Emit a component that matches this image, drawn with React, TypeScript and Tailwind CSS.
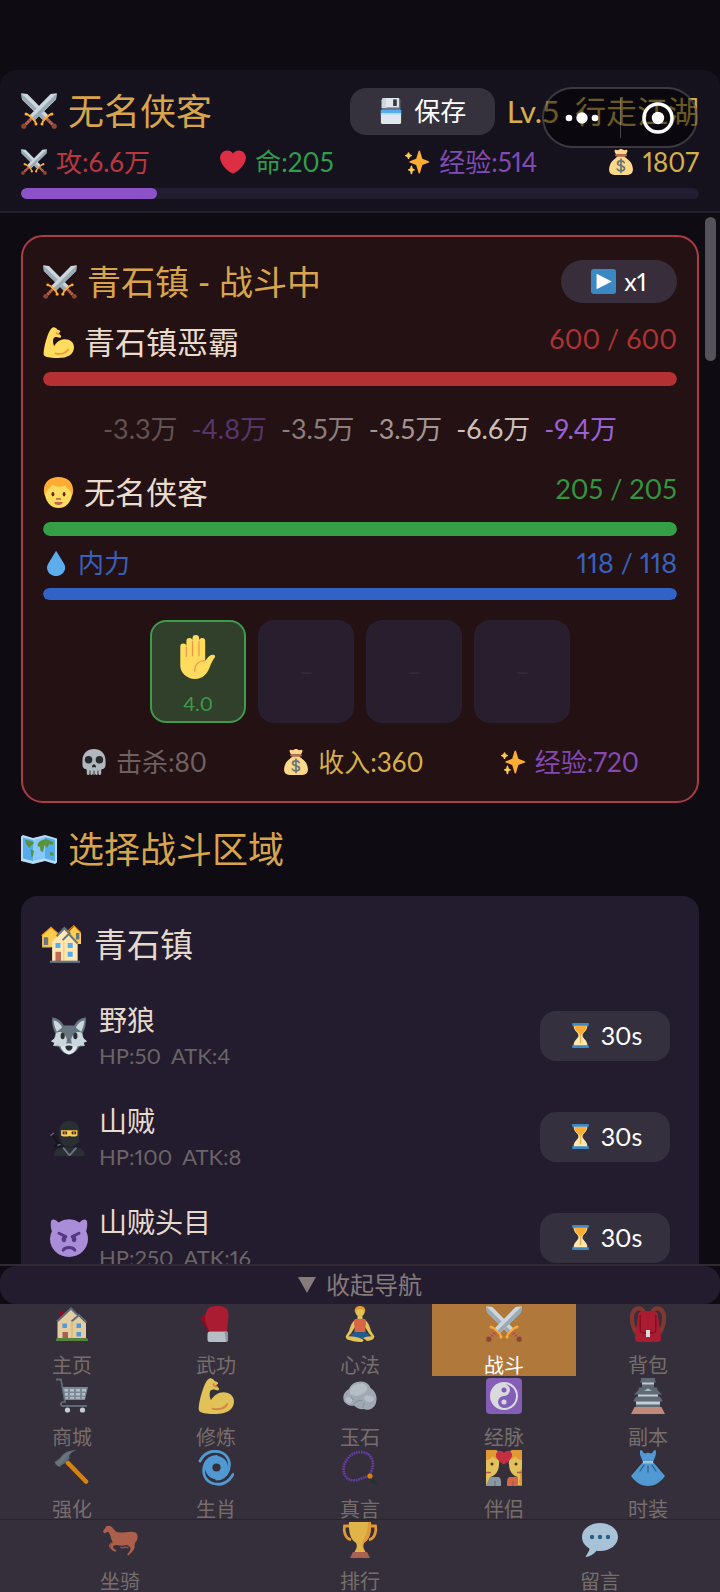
import { useState, type ReactNode } from "react";

const sword = (
  <g>
    <path fill="#CCD6DD" d="M.2.2 6.4 1 27.500 22.500 22.500 27.500 1 6.4z" />
    <path fill="#9AAAB6" d="M.2.2 1 6.4 22.500 27.500l2.500-2.500z" />
    <path stroke="#BF6952" strokeWidth="3" d="m25.5 25.5 6 6" />
    <path stroke="#8A3B26" strokeWidth="1" d="m26.8 28.6 2-2m0 4 2-2" />
    <circle cx="33.200" cy="33.200" r="2.600" fill="#8A4633" />
    <path fill="none" stroke="#FFAC33" strokeWidth="2" strokeLinecap="round" d="M21 31c.3-2.600 1.400-3.600 3-5s3.800-4.700 7-5" />
    <circle cx="31" cy="21" r="1.500" fill="#FFAC33" />
    <circle cx="21" cy="31" r="1.500" fill="#FFAC33" />
  </g>
);

const ICONS: Record<string, ReactNode> = {
  swords: (
    <>
      {sword}
      <g transform="matrix(-1 0 0 1 36 0)">{sword}</g>
    </>
  ),
  heart: (
    <path fill="#DD2E44" d="M35.885 11.833c0-5.450-4.418-9.868-9.867-9.868-3.308 0-6.227 1.633-8.018 4.129-1.791-2.496-4.710-4.129-8.017-4.129-5.450 0-9.868 4.417-9.868 9.868 0 .772.098 1.520.266 2.241C1.751 22.587 11.216 31.568 18 34.034c6.783-2.466 16.249-11.447 17.617-19.959.170-.721.268-1.469.268-2.242z" />
  ),
  sparkles: (
    <>
      <path fill="#FFAC33" d="M34.347 16.893l-8.899-3.294-3.323-10.891c-.128-.420-.517-.708-.956-.708-.439 0-.828.288-.956.708l-3.322 10.891-8.900 3.294c-.393.146-.653.519-.653.938 0 .418.260.793.653.938l8.895 3.293 3.324 11.223c.126.424.516.715.959.715.442 0 .833-.291.959-.716l3.324-11.223 8.896-3.293c.391-.144.652-.518.652-.937 0-.418-.261-.792-.653-.938z" />
      <path fill="#FFCC4D" d="M14.470 27.894l-2.314-.856-.9-3.300c-.118-.436-.513-.738-.964-.738-.451 0-.846.302-.965.737l-.9 3.300-2.313.856c-.393.145-.653.520-.653.938 0 .418.260.793.653.938l2.301.853.907 3.622c.112.445.511.756.970.756.459 0 .858-.311.970-.757l.907-3.622 2.301-.853c.393-.143.653-.518.653-.936 0-.418-.260-.793-.653-.938zM10.406 8.225l-2.364-.875-.875-2.365c-.146-.393-.519-.653-.938-.653-.418 0-.792.260-.938.653l-.875 2.365-2.365.875c-.393.146-.653.520-.653.938 0 .418.260.792.653.938l2.365.875.875 2.365c.146.393.520.653.938.653.418 0 .792-.260.938-.653l.875-2.365 2.365-.875c.393-.146.653-.520.653-.938 0-.418-.261-.792-.654-.938z" />
    </>
  ),
  money: (
    <>
      <path fill="#FDD888" d="M31.898 19.198c-2.500-3.900-8.200-7.600-9.300-9.198h-9.200c-1 1.600-6.800 5.200-9.300 9.198C2.700 22 1.500 25.500 1.500 28.500 1.500 33 4.500 36 9 36h18c4.500 0 7.500-3 7.500-7.500 0-3-1.200-6.500-2.602-9.302z" />
      <path fill="#FDD888" d="M24.500 7.800c2.500-2.500 3-5.800 1.600-6.600C25 .3 23.600 2 22 1.500 20.600 1 19.800 0 18 0s-2.600 1-4 1.500C12.400 2 11 .3 9.900 1.200c-1.400.8-.9 4.100 1.600 6.600z" />
      <rect x="10" y="7" width="16" height="3.400" rx="1.700" fill="#BF6952" />
      <path fill="none" stroke="#67757F" strokeWidth="2.400" strokeLinecap="round" d="M22.500 18.800c-.8-1.500-2.300-2.200-4.500-2.200-2.900 0-4.700 1.200-4.700 3.300 0 4.800 9.600 2 9.600 6.800 0 2.200-2 3.500-4.900 3.500-2.400 0-4.200-.8-5-2.400M18 14v18.500" />
    </>
  ),
  floppy: (
    <>
      <path fill="#66757F" d="M8 0h20a3 3 0 0 1 3 3v14H5V3a3 3 0 0 1 3-3z" />
      <path fill="#CCD6DD" d="M5 3a3 3 0 0 1 3-3h4v14H5z" />
      <path fill="#E1E8ED" d="M11 0h18v13H11z" />
      <path fill="#31373D" d="M21 2h5v9h-5z" />
      <path fill="#E1E8ED" d="M4 17h28v17a2 2 0 0 1-2 2H6a2 2 0 0 1-2-2z" />
      <path fill="#55ACEE" d="M4 16.500h28V21H4z" />
      <path fill="#BBDDF5" d="M4 21h28v2.500H4z" />
    </>
  ),
  play: (
    <>
      <rect width="36" height="36" rx="4" fill="#3B88C3" />
      <path fill="#FFF" d="M8 7l22 11L8 29z" />
    </>
  ),
  muscle: (
    <>
      <path fill="#FFDC5D" d="M12.804 22.277c-.057-.349-.124-.679-.206-.973-.62-2.230-1.140-3.164-.918-5.494.29-1.584.273-4.763 4.483-4.268 1.112.131 2.843.927 3.834.910.567-.010.980-1.157 1.017-1.539.051-.526-.865-1.420-1.248-1.813-.383-.393-2.039-1.466-2.039-1.466.5-.7 2.700-1.700 2.400-2.700-.4-1.500-3.500-1.600-3.800-2.300C15.900 1.300 13.700 0 12.200.2 10.300.5 8.900 2.600 7.800 4.400 5.300 8.600 1.600 20.700.8 28.600c-.2 2-.3 4.200 1.200 5.100C4.300 35.500 11 36 18 36c9.800 0 18-3.900 18-12.500 0-5.600-4.500-9.300-10.200-9.300-5.800 0-9.800 3.100-12.996 8.077z" />
      <path fill="none" stroke="#EF9645" strokeWidth="1.900" strokeLinecap="round" d="M14.500 30.600c5.500 1.500 12.500.3 14.700-4.600M18.500 8.500c-1.700-.2-2.800-1-3-2.200" />
    </>
  ),
  person: (
    <>
      <path fill="#FFDC5D" d="M18 2C8 2 2 8 2 17c0 11 7 19 16 19s16-8 16-19C34 8 28 2 18 2z" />
      <path fill="#FFAC33" d="M18 0C8 0 1 6 1 15.500c0 2.500.5 4.500 1.200 6 .8-3 2-6.500 4.300-8 2-1.200 3-2.500 4-4.500 5 3 12.500 2.500 15.500 1 .8 2.500 2 3.300 3.500 4 2.300 1.200 3.500 4.500 4.300 7.500.7-1.500 1.200-3.500 1.200-6C35 6 28 0 18 0z" />
      <ellipse cx="11.500" cy="20" rx="1.600" ry="2.500" fill="#662113" />
      <ellipse cx="24.500" cy="20" rx="1.600" ry="2.500" fill="#662113" />
      <path fill="#C1694F" d="M16 24.500h4a1 1 0 0 1 0 2h-4a1 1 0 0 1 0-2zM13 29h10c0 2.200-2.300 3.500-5 3.500S13 31.200 13 29z" />
    </>
  ),
  droplet: (
    <path fill="#5DADEC" d="M28.344 17.768 18.148 1.090 8 17.654c-2.200 3.100-3 6.300-2 9.600C7.500 32.500 12.300 36 18.100 36s10.700-3.600 12.100-8.700c.900-3.300.3-6.600-1.856-9.532z" />
  ),
  hand: (
    <>
      <path fill="#FFDC5D" d="M3.500 9.500a2.500 2.500 0 0 1 5 0V5a2.500 2.500 0 0 1 5 0V2.700a2.700 2.700 0 0 1 5.400 0V5a2.500 2.500 0 0 1 5 0v16l2.500-3c1-1 2.200-1.900 3.800-1.800 1.700.1 2.200 1.300 1.400 2.400-1.700 2.200-2.800 4.700-3.900 7.400C25.500 32 22 36 15.500 36S3.500 31 3.500 25z" />
      <path fill="none" stroke="#EF9645" strokeWidth="1" strokeLinecap="round" d="M8.500 10v7.500m5-12V17m5.300-11.500V17M23.900 21c-4.700-.3-8.300 2.500-8.700 8.500" />
    </>
  ),
  skull: (
    <>
      <path fill="#CCD6DD" d="M34 16C34 6 27 0 18 0S2 6 2 16v6c0 3 2 5.500 6 6.500V34c0 2.700 4 2.700 4 0 0 2.700 4 2.700 4 0 0 2.700 4 2.700 4 0 0 2.700 4 2.700 4 0 0 2.700 4 2.700 4 0v-5.500c4-1 6-3.500 6-6.500z" />
      <circle cx="10.500" cy="15" r="5.200" fill="#292F33" />
      <circle cx="25.500" cy="15" r="5.200" fill="#292F33" />
      <path fill="#292F33" d="M18 21c1.500 0 3.200 2.500 2.700 3.800-.6 1.200-2 .6-2.700.2-.7.400-2.100 1-2.700-.2-.5-1.300 1.200-3.800 2.700-3.800z" />
      <path stroke="#292F33" strokeWidth="1.300" d="M12.500 30v6m11-6v6m-5.500-6v6" />
    </>
  ),
  map: (
    <>
      <path fill="#BBDDF5" d="M0 5.500 2 4l10 3 12-3 12 3.500v24L34 33l-10-3-12 3L0 30z" />
      <path fill="#55ACEE" d="m2 6.500 10 2.500v21L2 27.500zM24 6l10 2.700v21.500L24 27.500z" />
      <path fill="#88C9F9" d="m12 9 12-3v21.500L12 30z" />
      <path fill="#5C913B" d="M4 9c3 0 6 1 9 2.500-.500 2.500-3 2.500-4.500 5.500L5 13zM9.500 18l3.500 2-1 5-1.500 1.500zM17 12c3-3 6-4 8-4l7 3v3l-4-1-2 4-2.500-3-1.500 7-2.500-1-.5-4-2.500-1zM29 21l3.500 1v3L29 24z" />
    </>
  ),
  houses: (
    <>
      <path fill="#FFCC4D" d="M1 10 9 3l7 6v12H1zM24 8l6-6 6 6v10H24z" />
      <path fill="none" stroke="#66757F" strokeWidth="1" d="M.8 21h8" />
      <path fill="none" stroke="#F4900C" strokeWidth="1" d="m.5 10.500 8.500-7.500 8 7M22 8.500 29.500 1.500 35.700 7.500" />
      <path fill="#66757F" d="M2.500 12h4v7h-4zM31.500 8h3v6h-3z" />
      <path fill="#FFE8B6" d="M10 16 21 5l12 12v17H10z" />
      <path fill="none" stroke="#66757F" strokeWidth="1.800" d="m14 11 7-7.500L26.500 9M19.500 14.500 25 9l8 8.500" />
      <path stroke="#FFCC4D" strokeWidth="1" d="M20.500 16v17" />
      <path fill="#55ACEE" d="M13 17h4.500v4.500H13zM24 17h4.500v4.500H24zM24 25h4.500v4.500H24z" />
      <path fill="#BF6952" d="M13 25h5v8.500h-5z" />
      <path fill="#66757F" d="M8 33h27v2H8z" />
    </>
  ),
  wolf: (
    <>
      <path fill="#66757F" d="M2 .5c5 .5 9 3.500 11 7.500h10c2-4 6-7 11-7.500.500 6-1 11-3 15l1 5 3.500 3-4 1 1 3-5 1c-2 4-5 6.500-9.500 7-4.500-.5-7.500-3-9.500-7l-5-1 1-3-4-1L4 20.500l1-5C3 11.500 1.500 6.500 2 .5z" />
      <path fill="#CCD6DD" d="M3.500 3c4 1 6.500 3.500 8 7L6.500 14C4.500 10 3.500 6 3.500 3zM32.500 3c-4 1-6.500 3.500-8 7l5 4c2-4 3-8 3-11zM6 15c4-2 8 .5 10 6l-1 9-5-2-3-1-4 .5 1-3-3-1.500L4.500 20zM30 15c-4-2-8 .5-10 6l1 9 5-2 3-1 4 .5-1-3 3-1.500-3.500-3z" />
      <path fill="#E1E8ED" d="M10 28c3 0 5-1 6-3h4c1 2 3 3 6 3-1 4-5 7.500-8 7.500S11 32 10 28z" />
      <ellipse cx="12" cy="18" rx="2" ry="3" fill="#292F33" />
      <ellipse cx="24" cy="18" rx="2" ry="3" fill="#292F33" />
      <path fill="#292F33" d="M14.500 28c1.500-1.200 5.500-1.200 7 0 0 2.500-2 4-3.500 4s-3.500-1.500-3.500-4z" />
    </>
  ),
  ninja: (
    <>
      <path fill="#292F33" d="M4 36c0-5 2-8 8-8h12c6 0 9 3 9 8z" />
      <path fill="#292F33" d="M8.500 14C8.500 7 12 2.500 18.500 2.500S28 7 28 14c0 3-.3 4.500-1 6.500l1.500 2-2.500 1c-2 2.500-4.500 4-7.500 4-6 0-10-5.500-10-13.500z" />
      <path fill="#FFCC4D" d="M10.500 11.500H26v5c-2 1.300-4.500 1.500-7.500.5-3 1-6 .8-8-.5z" />
      <path fill="#292F33" d="M12 12.800h4.200v2.700H12zM20.500 12.800h4.200v2.700h-4.200z" />
      <path fill="#C1694F" d="M13.400 12.800h1.600v2.700h-1.600zM21.800 12.800h1.600v2.700h-1.600z" />
      <path fill="none" stroke="#66757F" strokeWidth="1.800" d="m12.500 28 6 7.500L25 28" />
      <path fill="none" stroke="#11171a" strokeWidth="2.400" d="m3 16.500 7 11M4 27l6-3" />
      <path stroke="#66757F" strokeWidth="1.200" d="m.5 16.500 3-2M7 26l3-1" />
    </>
  ),
  imp: (
    <>
      <path fill="#AA8DD8" d="M35.200 3.200C35-.8 31-.2 28 3.300A18 18 0 0 0 8 3.300C5-.2 1-.8.8 3.200.6 7 1 9.500 1.800 11.500A17 17 0 0 0 0 19c0 9.500 8 17 18 17s18-7.500 18-17c0-2.700-.6-5.200-1.800-7.500.8-2 1.200-4.500 1-8.300z" />
      <path fill="none" stroke="#553986" strokeWidth="2.800" strokeLinecap="round" d="m8.500 13.500 6.500 3.200m12.500-3.200L21 16.700M12.500 29.500c2-3.300 9-3.300 11 0" />
      <ellipse cx="13.200" cy="19" rx="2.200" ry="3" fill="#553986" />
      <ellipse cx="22.800" cy="19" rx="2.200" ry="3" fill="#553986" />
    </>
  ),
  hourglass: (
    <>
      <path fill="#FFE8B6" d="M21 18c0-2 .7-2.900 3-5.300 2.200-2.400 4-4.700 4-9.700H8c0 5 1.800 7.300 4 9.700 2.300 2.400 3 3.300 3 5.300s-.7 2.900-3 5.300C9.800 25.700 8 28 8 33h20c0-5-1.800-7.300-4-9.700-2.300-2.400-3-3.300-3-5.300z" />
      <path fill="#FFAC33" d="M9 4c.5 4.500 2 7 5.500 10 2 1.700 2.700 2.700 2.700 4v11h1.600V18c0-1.300.7-2.300 2.700-4C25 11 26.500 8.500 27 4z" />
      <path fill="#3B88C3" d="M6 0h24v4H6zM6 32h24v4H6z" />
    </>
  ),
  house: (
    <>
      <path fill="#A0041E" d="M5 5h4.500v6H5z" />
      <path fill="#FFE8B6" d="M3.500 15 17 2.500 32 17v16H3.500z" />
      <path fill="none" stroke="#66757F" strokeWidth="2" d="M3 15.500 17 2.500l6 6M17.500 15.500 25 9l7.500 7.500" />
      <path stroke="#FFCC4D" strokeWidth="1" d="M18 15v17" />
      <path fill="#55ACEE" d="M8.500 17.500H13V22H8.500zM22.500 17.500H27V22h-4.500zM22.500 26H27v4.500h-4.500z" />
      <path fill="#BF6952" d="M8.500 26H14v7H8.500z" />
      <path fill="#5C913B" d="M4 32h28a2 2 0 0 1 2 2v1H2v-1a2 2 0 0 1 2-2z" />
    </>
  ),
  glove: (
    <>
      <path fill="#A0041E" d="M7 9c-2 0-4 .5-4.500 2-.5 1.500.5 3 1.500 4.500 1.800 3 4 7.500 7 10L14 18z" />
      <path fill="#BE1931" d="M8.500 5C10 1 14 0 20 0c7 0 10.500 2.500 10.500 9 0 6-1.500 11-1.500 16.500H11.500C8.500 20 5 12 8.500 5z" />
      <rect x="9.500" y="25.500" width="20.500" height="10.500" rx="2.500" fill="#CCD6DD" />
      <path fill="#99AAB5" d="M26.500 25.500H28c1.300 0 2 .7 2 1.500v6.500c0 1.300-.8 2-2 2.300z" />
    </>
  ),
  lotus: (
    <>
      <path fill="#FFDC5D" d="M15.500 8h5v6h-5zM13 14l.5 6L9 27.500l-4 4.500-1.500-1.500L7 25c1.500-6 3.500-9.500 6-11zM23 14l-.5 6 4.500 7.500 4 4.500 1.500-1.500L29 25c-1.500-6-3.500-9.500-6-11z" />
      <path fill="#F4704B" d="M13 13h10c1.500 2.500 1 5 .5 7.500V27h-11v-6.500C12 18 11.500 15.500 13 13z" />
      <path fill="#269" d="M12 26h12l4 4-10 4-10-4z" />
      <path fill="#FFDC5D" d="M5 30.500c5-.5 10 .5 15 2.500 3 1.200 1 3-1 3-5.500 0-10.500-1.500-13.500-2.500-1.500-.5-2-2.600-.5-3zM31 30.500c-4-.5-7 .5-10 1.500l4 3c2.500-.3 4-.8 5.500-1.500 1.500-.5 2-2.600.5-3z" />
      <circle cx="18" cy="5.500" r="4.800" fill="#FFDC5D" />
      <path fill="#FFAC33" d="M12.800 6C12.300 2 14.500 0 18 0s5.700 2 5.200 6C22 4.500 21 3 18 3s-4 1.500-5.200 3z" />
    </>
  ),
  backpack: (
    <>
      <path fill="none" stroke="#8F3A30" strokeWidth="4.200" d="M8 28C1 22 0 6 6 3c4-1.800 7 0 8 4M28 28c7-6 8-22 2-25-4-1.800-7 0-8 4" />
      <path fill="#BE1931" d="M8 9c0-3 3-4 10-4s10 1 10 4l3 22c.5 3-1 5-4 5H9c-3 0-4.500-2-4-5z" />
      <path fill="#A0041E" d="M9.500 9h17v15c0 2-2 3.500-4 3.500h-9c-2 0-4-1.500-4-3.500z" />
      <path fill="#BE1931" d="M11 9h14v14.500c0 1.500-1 2.500-2.500 2.500h-9c-1.500 0-2.500-1-2.500-2.500z" />
      <path fill="#F5F8FA" d="M16 24h4v7h-4z" />
    </>
  ),
  cart: (
    <>
      <path fill="none" stroke="#66757F" strokeWidth="1.800" d="M2 1.500h5L11 24c-4-1-5.500 3-2.500 4H33" />
      <path fill="#8899A6" d="M8.500 9H34l-3 13H11z" />
      <g fill="#CCD6DD">
        <path d="M10.500 11h3.500v2.500h-3.500zM16 11h4v2.500h-4zM22 11h4v2.500h-4zM28 11h4v2.500h-4zM11 15h3v2.500h-3zM16 15h4v2.500h-4zM22 15h4v2.500h-4zM28 15h3v2.500h-3zM11.500 19H14v1.800h-2.500zM16 19h4v1.800h-4zM22 19h4v1.800h-4zM28 19h2.500v1.800H28z" />
      </g>
      <circle cx="13.500" cy="32" r="2.600" fill="#E1E8ED" />
      <circle cx="28.500" cy="32" r="2.600" fill="#E1E8ED" />
    </>
  ),
  rock: (
    <>
      <path fill="#B3BFC8" d="M1.500 21c-1-4 2-8 5.500-10 1.500-4.500 6-7.500 12-7.500 5 0 8.500 3 9.500 6.500 4 2.500 6.500 7 6 12-.5 5-3 8.500-7 9.500-2.500.8-4-.6-6.500-.6-4 1-6-1-9-3.400-4 1-6.500-.5-8.500-2.500-1.500-1.200-2-2.500-2-4z" />
      <path fill="#CCD6DD" d="M8 12c2-5 7-7 12-6.500 4 .5 6 3.500 5 6s-4 4-7 5.500-5 1-7 .5-4-2.500-3-5.500zM22 19c3-2.500 8-1.500 10 1 0 3-2 4-4.500 4S22 22.500 22 19zM4 20c2-1.500 5-.5 6 2s-2 4-4 3-3-3-2-5z" />
      <path fill="none" stroke="#93A1AC" strokeWidth="1" d="M12 26c2-3 5-4 8-3.500M21 30c-.5-2 0-4 2-5M9 19l3 3" />
    </>
  ),
  yinyang: (
    <>
      <rect width="36" height="36" rx="4" fill="#9266CC" />
      <circle cx="18" cy="18" r="14" fill="#F5F8FA" />
      <path fill="#9266CC" d="M18 6a6 6 0 0 1 0 12 6 6 0 0 0 0 12 12 12 0 1 0 0-24z" />
      <circle cx="18" cy="12" r="2.500" fill="#9266CC" />
      <circle cx="18" cy="24" r="2.500" fill="#F5F8FA" />
    </>
  ),
  castle: (
    <>
      <path fill="#D99A85" d="M4.500 29h27l3.500 7H1z" />
      <path fill="#E1E8ED" d="M6 22h24v7H6zM8 15h20v5H8zM12 3h12v6H12z" />
      <path fill="#66757F" d="M11 0h14v2l1 2.500H10L11 2zM12 6.500h12V9H12zM9 9.500h2l7-2 7 2h2l.5 2.500 4.500 4.500H4L8.500 12zM6 18.500h24l3 5H3zM6 26.500h24V29H6z" />
      <path fill="#CCD6DD" d="m14 13 4-2.500 4 2.500z" />
    </>
  ),
  hammer: (
    <>
      <path stroke="#F4900C" strokeWidth="4.600" strokeLinecap="round" d="m14 13 18 18.500" />
      <path fill="#66757F" d="M.5 12.500C2 10 5 9.500 6 8c3-4.500 9-8.500 16-7.500-4.500 1.500-7.500 4-6.500 8l-5 5c-1.500 1-3 1-4 3-1 .8-2 .3-2.500-.5z" />
      <path fill="#8899A6" d="M1 14c1.500-3 5-3 6-5 2.500-4 7-7 12-7.500-3 1.500-6 4-8 7.500l-6 6-1 1.500z" opacity=".4" />
    </>
  ),
  cyclone: (
    <>
      <circle cx="18.500" cy="17.500" r="7.800" fill="none" stroke="#55ACEE" strokeWidth="7.400" />
      <path fill="none" stroke="#55ACEE" strokeWidth="2.800" strokeLinecap="round" d="M2 11C6 3 14-.3 22 2c8 2.600 11 10 8.500 18-2 6-7 9-12 9M35 24.500C31 32.500 23 35.800 15 33.500 7 30.900 4 23.500 6.500 15.500c2-6 7-9 12-9" />
    </>
  ),
  beads: (
    <>
      <path fill="none" stroke="#6E3FB3" strokeWidth="2.600" strokeDasharray="1.800 .7" d="M28 24c4-7 4-14-1-19C22 .5 13 1 7 7S0 22 4 27c3 4 9 4 14 2 4-1.500 7-2 10-4" />
      <circle cx="28" cy="26" r="2.600" fill="#F4900C" />
      <path stroke="#292F33" strokeWidth="3" d="m30 29 4 4" />
      <path stroke="#292F33" strokeWidth="2" d="m28 31 7 3" />
    </>
  ),
  couple: (
    <>
      <path fill="#99AAB5" d="M0 27h12c2 0 3 2 3 5v4H0z" />
      <path fill="#F4704B" d="M36 27H24c-2 0-3 2-3 5v4h15z" />
      <path fill="#FFDC5D" d="M0 3h11c2 4 2.500 8 2 12-.5 7-4 11-9 12l-4 8zM36 3H25c-2 4-2.500 8-2 12 .5 7 4 11 9 12v8h4z" />
      <path fill="#FFAC33" d="M0 0h10c3 1 3.500 5 3.500 9C10 9.500 8 8 6.500 6.500 4.500 9 3 10 0 10zM36 0H26c-3 1-3.500 5-3.500 9 3.500.5 5.500-1 7-2.500C31.500 9 33 10 36 10zM33 22c2 3 .5 7 0 10l3 4V18z" />
      <path fill="#DD2E44" d="M18 14.500c-5-3-8.500-6.500-8-10C10.500 0 16-.5 18 3c2-3.500 7.500-3 8 1.500.5 3.500-3 7-8 10z" />
      <circle cx="6" cy="14" r="1.500" fill="#662113" />
      <circle cx="30" cy="14" r="1.500" fill="#662113" />
      <path stroke="#C1694F" strokeWidth="1.400" d="M0 22.500h5M31 22.500h5" />
      <path stroke="#66757F" d="M9 31v5M27 31v5" />
    </>
  ),
  dress: (
    <>
      <path fill="#55ACEE" d="M11 0c1.500 0 2 3 4 3.500 1.500 0 2-1 3-1s1.500 1 3 1C23 3 23.500 0 25 0s1 4 .5 6L23 12l12 14c-5 7-11 10-17 10S6 33 1 26l12-14-2.500-6C10 4 9.500 0 11 0z" />
      <path fill="#BBDDF5" d="M13 11h10v2.500H13z" />
      <path fill="none" stroke="#2A6797" strokeWidth="1.200" strokeLinecap="round" d="m14 15-4 6m8-5v6m4-7 4 6" />
    </>
  ),
  horse: (
    <>
      <path fill="#C1694F" d="M1 10c0-2 2-3 2.500-4.500C4 4.500 5 3.500 7.500 4c3 .5 4 3.500 6.500 5.500 2.500 1.500 6 1 9.500.7 3-.3 7-1.200 10 .3 2 1 2.500 4 2 6-.5 2.500-2.500 3.500-2.800 6-.2 2 .3 3.500-1.200 5.500-1.500 2-3 3.500-5 5.500l-1.500-1c2-2 3.500-4 3.500-6 0-1.500-2-2.500-3.500-3.500-4 1-7 1-10 0-3 0-4.500 1-4 2.500.5 1.200 2.500 2 4 3.500l-2.500.5c-2-1-4.500-2.500-4.500-5s2-3 3-4c-2-2.500-2-7-4.500-10.500-1-.5-2 .5-3.500 1.500z" />
      <path fill="none" stroke="#A8563F" strokeWidth="1.500" d="M11 20.500c-1.500.5-3 1.500-3.500 3l1 2.500m10-1c2 2 5-1 8 1" />
    </>
  ),
  trophy: (
    <>
      <path fill="none" stroke="#FFAC33" strokeWidth="2.800" d="M9 4H2.500c-1 4 0 12 6.500 14M27 4h6.500c1 4 0 12-6.500 14" />
      <path fill="#FFCC4D" d="M7 0h22c.5 10-1.500 17-6 20-2 1.500-2 4-1.500 6l2.500 5H12l2.500-5c.5-2 .5-4.500-1.500-6C8.500 17 6.500 10 7 0z" />
      <path fill="#FFAC33" d="M26 0h3c.5 10-1.500 17-6 20-2 1.500-2 4-1.500 6l-1.500-2c0-8 6-9 6-24z" />
      <path fill="#BF6952" d="M11 30h14l3 6H8z" />
    </>
  ),
  speech: (
    <>
      <path fill="#BDDDF4" d="M18 1C8 1 0 7.300 0 15c0 5 3 9 7.500 11.500C7.500 29 5 32 3.500 35c5-.5 9-3.500 11-6.200 1.200.2 2.300.2 3.500.2 10 0 18-6.300 18-14S28 1 18 1z" />
      <circle cx="10" cy="15" r="2.200" fill="#2A6797" />
      <circle cx="18" cy="15" r="2.200" fill="#2A6797" />
      <circle cx="26" cy="15" r="2.200" fill="#2A6797" />
    </>
  ),
};

function Icon({ name, className }: { name: string; className: string }) {
  return (
    <svg viewBox="0 0 36 36" aria-hidden="true" className={`shrink-0 ${className}`}>
      {ICONS[name]}
    </svg>
  );
}

function Stat({ icon, text, className }: { icon: string; text: string; className: string }) {
  return (
    <span className={`flex items-center gap-[9px] text-[26px] ${className}`}>
      <Icon name={icon} className="size-[26px]" />
      {text}
    </span>
  );
}

function Bar({ value, label, track, fill }: { value: number; label: string; track: string; fill: string }) {
  return (
    <div role="progressbar" aria-label={label} aria-valuenow={value} className={`overflow-hidden rounded-full ${track}`}>
      <div className={`h-full rounded-full ${fill}`} style={{ width: `${value}%` }} />
    </div>
  );
}

const HITS = [
  { text: "-3.3万", tone: "text-[#615354]" },
  { text: "-4.8万", tone: "text-[#583569]" },
  { text: "-3.5万", tone: "text-[#8b7e7c]" },
  { text: "-3.5万", tone: "text-[#a39693]" },
  { text: "-6.6万", tone: "text-[#cdc0b9]" },
  { text: "-9.4万", tone: "text-[#9a62d6]" },
];

const ENEMIES = [
  { icon: "wolf", name: "野狼", hp: 50, atk: 4 },
  { icon: "ninja", name: "山贼", hp: 100, atk: 8 },
  { icon: "imp", name: "山贼头目", hp: 250, atk: 16 },
];

const TABS = [
  { icon: "house", label: "主页" },
  { icon: "glove", label: "武功" },
  { icon: "lotus", label: "心法" },
  { icon: "swords", label: "战斗" },
  { icon: "backpack", label: "背包" },
  { icon: "cart", label: "商城" },
  { icon: "muscle", label: "修炼" },
  { icon: "rock", label: "玉石" },
  { icon: "yinyang", label: "经脉" },
  { icon: "castle", label: "副本" },
  { icon: "hammer", label: "强化" },
  { icon: "cyclone", label: "生肖" },
  { icon: "beads", label: "真言" },
  { icon: "couple", label: "伴侣" },
  { icon: "dress", label: "时装" },
];

const MORE_TABS = [
  { icon: "horse", label: "坐骑" },
  { icon: "trophy", label: "排行" },
  { icon: "speech", label: "留言" },
];

function Tab({ icon, label, active, onSelect }: { icon: string; label: string; active: boolean; onSelect: () => void }) {
  return (
    <button
      type="button"
      onClick={onSelect}
      className={`flex h-[72px] flex-col items-center pt-0.5 text-[20px] leading-[22px] ${
        active ? "bg-[#b1783b] text-white" : "text-[#776e6c]"
      }`}
    >
      <Icon name={icon} className={`size-9 ${active ? "" : "opacity-85"}`} />
      <span className="mt-3">{label}</span>
    </button>
  );
}

function Header() {
  return (
    <header className="relative shrink-0 rounded-t-2xl border-b-2 border-[#242028] bg-[#15111d] px-[21px] pt-[17px] pb-3">
      <div className="flex h-12 items-center">
        <h1 className="flex items-center gap-[11px] text-[36px] leading-[48px] text-[#d9a54c]">
          <Icon name="swords" className="size-9" />
          无名侠客
        </h1>
        <button type="button" className="ml-auto flex h-[47px] w-[145px] items-center justify-center gap-2.5 rounded-2xl bg-[#35313d] text-[26px] text-white">
          <Icon name="floppy" className="size-[26px]" />
          保存
        </button>
        <span className="ml-3 flex gap-4 text-[31px] text-[#d5b04a]">
          <span>Lv.5</span>
          <span>行走江湖</span>
        </span>
      </div>
      <div className="mt-2 flex h-[38px] items-center justify-between">
        <Stat icon="swords" text="攻:6.6万" className="text-[#b93840]" />
        <Stat icon="heart" text="命:205" className="text-[#2f9e4c]" />
        <Stat icon="sparkles" text="经验:514" className="text-[#804bb4]" />
        <Stat icon="money" text="1807" className="text-[#d5b04a]" />
      </div>
      <div className="mt-[7px]">
        <Bar value={20} label="经验" track="h-[11px] bg-[#221d30]" fill="bg-[#8d52c8]" />
      </div>
      <div className="absolute top-[17px] right-[22px] flex h-[61px] w-[156px] items-center rounded-full border-2 border-white/20 bg-black/50">
        <button type="button" aria-label="更多" className="flex flex-1 items-center justify-center">
          <svg viewBox="0 0 36 12" className="h-3 w-9" fill="#fff">
            <circle cx="5" cy="6" r="3.300" />
            <circle cx="18" cy="6" r="5.700" />
            <circle cx="31" cy="6" r="3.300" />
          </svg>
        </button>
        <span className="h-10 w-px bg-white/25" />
        <button type="button" aria-label="关闭" className="flex flex-1 items-center justify-center">
          <svg viewBox="0 0 32 32" className="size-8">
            <circle cx="16" cy="16" r="14" fill="none" stroke="#fff" strokeWidth="3.500" />
            <circle cx="16" cy="16" r="6.200" fill="#fff" />
          </svg>
        </button>
      </div>
    </header>
  );
}

function Battle() {
  return (
    <section className="rounded-[22px] border-2 border-[#ae3c45] bg-[#231113] px-5 pt-[23px] pb-[21px]">
      <div className="flex items-center justify-between">
        <h2 className="flex items-center gap-2.5 text-[34px] leading-[43px] text-[#d9a54c]">
          <Icon name="swords" className="size-[34px]" />
          青石镇 - 战斗中
        </h2>
        <button type="button" className="flex h-[43px] w-[116px] items-center justify-center gap-2 rounded-full bg-[#372d3b] text-[25px] text-white">
          <Icon name="play" className="size-[25px]" />
          x1
        </button>
      </div>
      <div className="mt-4 flex h-[46px] justify-between">
        <span className="flex items-center gap-2.5 text-[31px] leading-[46px] text-[#eadccd]">
          <Icon name="muscle" className="size-[31px]" />
          青石镇恶霸
        </span>
        <span className="text-[27px] leading-[40px] text-[#ab3335]">600 / 600</span>
      </div>
      <div className="mt-[7px]">
        <Bar value={100} label="青石镇恶霸" track="h-3.5 bg-[#3a1a1c]" fill="bg-[#b53032]" />
      </div>
      <div className="mt-[23px] flex h-10 items-center justify-center gap-3.5 text-[27px]">
        {HITS.map((hit, i) => (
          <span key={i} className={hit.tone}>{hit.text}</span>
        ))}
      </div>
      <div className="mt-5 flex h-[46px] justify-between">
        <span className="flex items-center gap-2.5 text-[31px] leading-[46px] text-[#eadccd]">
          <Icon name="person" className="size-[31px]" />
          无名侠客
        </span>
        <span className="text-[27px] leading-[40px] text-[#329540]">205 / 205</span>
      </div>
      <div className="mt-[7px]">
        <Bar value={100} label="无名侠客" track="h-3.5 bg-[#1a3a1c]" fill="bg-[#359f48]" />
      </div>
      <div className="mt-[9px] flex h-9 items-center justify-between text-[#3860bd]">
        <Stat icon="droplet" text="内力" className="" />
        <span className="text-[27px]">118 / 118</span>
      </div>
      <div className="mt-[7px]">
        <Bar value={100} label="内力" track="h-3 bg-[#1a1c3a]" fill="bg-[#3162c6]" />
      </div>
      <div className="mt-5 flex justify-center gap-3">
        <button type="button" className="flex h-[103px] w-24 flex-col items-center justify-between rounded-2xl border-2 border-[#3f9b4c] bg-[#30402b] pt-[13px] pb-1.5 text-[20px] leading-6 text-[#399b49]">
          <Icon name="hand" className="size-11" />
          4.0
        </button>
        {[0, 1, 2].map((slot) => (
          <button key={slot} type="button" className="flex h-[103px] w-24 items-center justify-center rounded-2xl border-2 border-[#2a1f2e] bg-[#281e2e] text-[27px] text-[#332938]">
            –
          </button>
        ))}
      </div>
      <div className="mt-[21px] flex h-9 items-center justify-around">
        <Stat icon="skull" text="击杀:80" className="text-[#6d6260] [&>svg]:opacity-85" />
        <Stat icon="money" text="收入:360" className="text-[#d5b04a]" />
        <Stat icon="sparkles" text="经验:720" className="text-[#8549b5]" />
      </div>
    </section>
  );
}

function Zone() {
  return (
    <section className="mt-[23px] rounded-2xl bg-[#221c2e] px-5 pt-6 pb-5">
      <h3 className="flex items-center gap-[13px] text-[33px] leading-[48px] text-[#e6dacd]">
        <Icon name="houses" className="size-10" />
        青石镇
      </h3>
      <ul className="mt-[17px]">
        {ENEMIES.map((enemy) => (
          <li key={enemy.name} className="flex h-[101px] items-center gap-[11px] px-[9px]">
            <Icon name={enemy.icon} className="size-[38px]" />
            <div className="flex-1">
              <p className="text-[28px] leading-[40px] text-[#e6dacd]">{enemy.name}</p>
              <p className="flex gap-2.5 text-[22px] leading-8 text-[#6c6466]">
                <span>HP:{enemy.hp}</span>
                <span>ATK:{enemy.atk}</span>
              </p>
            </div>
            <button type="button" className="flex h-[50px] w-[130px] items-center justify-center gap-2 rounded-2xl bg-[#35303d] text-[25px] text-white">
              <Icon name="hourglass" className="size-[25px]" />
              30s
            </button>
          </li>
        ))}
      </ul>
    </section>
  );
}

export default function App() {
  const [tab, setTab] = useState("战斗");
  const [open, setOpen] = useState(true);
  return (
    <div className="flex h-screen flex-col bg-[#0e0b12] pt-[70px] font-['Lato','Noto_Sans_CJK_SC',sans-serif] whitespace-nowrap proportional-nums">
      <Header />
      <div className="relative min-h-0 flex-1">
        <main className="h-full overflow-y-auto px-[21px] pt-[22px] [scrollbar-width:none]">
          <Battle />
          <h2 className="mt-[22px] flex items-center gap-[11px] text-[36px] leading-[48px] text-[#d9a54c]">
            <Icon name="map" className="size-9" />
            选择战斗区域
          </h2>
          <Zone />
        </main>
        <div className="absolute top-1 right-1 h-36 w-[11px] rounded-full bg-[#54525a]" />
      </div>
      <nav className="shrink-0 bg-[#352f3c]">
        <div className="border-t-2 border-[#312832] bg-[#0e0b12]">
          <button
            type="button"
            onClick={() => setOpen(!open)}
            className="flex h-[38px] w-full items-center justify-center gap-2.5 rounded-2xl bg-[#221c2e] text-[24px] text-[#857b7a]"
          >
            <svg viewBox="0 0 18 16" className="h-4 w-[18px]" fill="currentColor" aria-hidden="true">
              <path d="M0 0h18L9 16z" />
            </svg>
            收起导航
          </button>
        </div>
        {open && (
          <>
            <div className="grid grid-cols-5">
              {TABS.map((t) => (
                <Tab key={t.label} {...t} active={tab === t.label} onSelect={() => setTab(t.label)} />
              ))}
            </div>
            <div className="grid grid-cols-3 shadow-[0_-1px_0_#29242f]">
              {MORE_TABS.map((t) => (
                <Tab key={t.label} {...t} active={tab === t.label} onSelect={() => setTab(t.label)} />
              ))}
            </div>
          </>
        )}
      </nav>
    </div>
  );
}
